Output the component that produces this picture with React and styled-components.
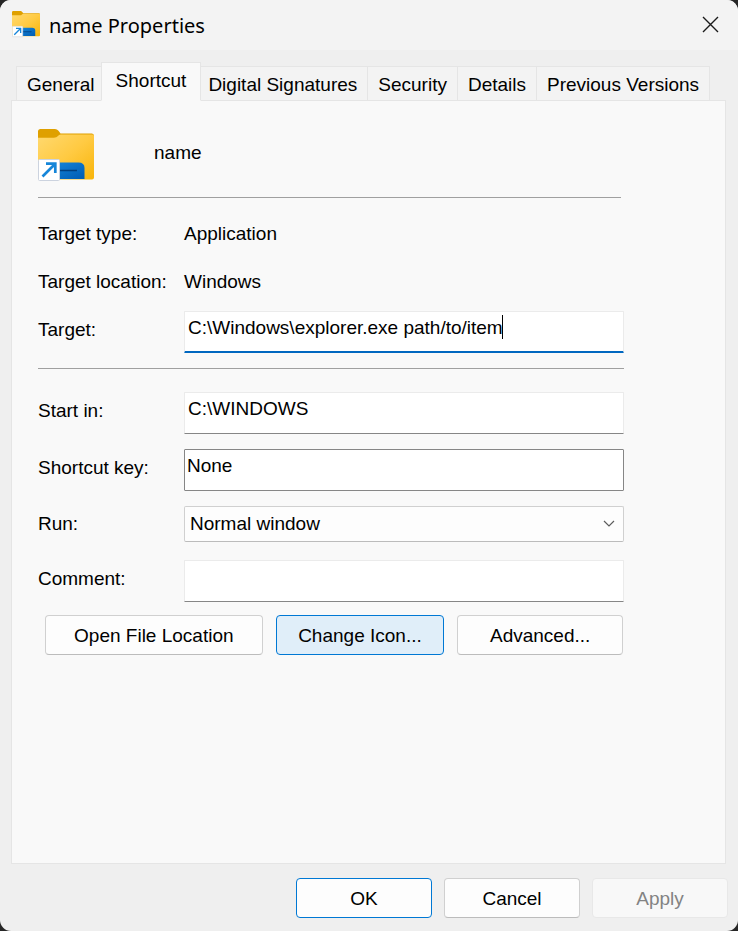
import React from "react";
import styled, { createGlobalStyle } from "styled-components";

const GlobalStyle = createGlobalStyle`
  *, *::before, *::after { box-sizing: border-box; }
  body {
    margin: 0;
    background: #262626;
    color: #000;
    font-family: "Liberation Sans", Arial, sans-serif;
    font-size: 19px;
    line-height: 24px;
  }
  button, input, select { font: inherit; color: inherit; }
`;

const Dialog = styled.form`
  display: flex;
  flex-direction: column;
  min-height: 100vh;
  background: #efefef;
  border-radius: 11px;
  overflow: hidden;
`;

const TitleBar = styled.header`
  display: flex;
  align-items: center;
  gap: 9px;
  height: 50px;
  padding: 0 18px 0 12px;
  background: #f3f3f3;
`;

const Title = styled.h1`
  flex: 1;
  margin: 0;
  padding-top: 2px;
  font-family: "Noto Sans", "Open Sans", sans-serif;
  font-size: 20px;
  font-weight: 400;
`;

const CloseButton = styled.button`
  display: flex;
  padding: 0 0 2px;
  border: 0;
  background: none;
`;

const TabList = styled.div`
  display: flex;
  align-items: flex-end;
  height: 51px;
  padding: 0 16px;
  margin-bottom: -1px;
`;

const Tab = styled.button`
  height: ${(p) => (p.$selected ? 39 : 35)}px;
  padding: ${(p) => (p.$selected ? "0 14px 2px" : "2px 10px 0")};
  margin: ${(p) => (p.$selected ? "0 -4px" : "0 -1px 0 0")};
  position: relative;
  z-index: ${(p) => (p.$selected ? 1 : 0)};
  border: 1px solid #e5e5e5;
  border-bottom-color: ${(p) => (p.$selected ? "#f9f9f9" : "#e5e5e5")};
  background: ${(p) => (p.$selected ? "#f9f9f9" : "#f3f3f3")};
  white-space: nowrap;
`;

const Panel = styled.main`
  flex: 1;
  margin: 0 12px 0 11px;
  padding: 28px 101px 24px 26px;
  border: 1px solid #e5e5e5;
  background: #f9f9f9;
`;

const Summary = styled.div`
  display: flex;
  align-items: flex-start;
  gap: 60px;
  height: 68px;
`;

const ItemName = styled.span`
  padding-top: 12px;
`;

const Divider = styled.hr`
  height: 1px;
  margin: ${(p) => (p.$short ? "0 3px 12px 0" : "10px 0 23px")};
  border: 0;
  background: #a0a0a0;
`;

const Fields = styled.div`
  display: grid;
  gap: ${(p) => p.$gap || 0}px;
`;

const Row = styled.div`
  display: grid;
  grid-template-columns: 146px 1fr;
  align-items: center;
  min-height: ${(p) => p.$height}px;
  margin-bottom: ${(p) => p.$after || 0}px;
`;

const Label = styled.label`
  padding-bottom: ${(p) => (p.$raised ? 4 : 0)}px;
`;

const FieldBox = styled.div`
  position: relative;
  display: grid;
`;

const TextInput = styled.input`
  width: 100%;
  height: 42px;
  padding: 0 3px 8px;
  border: 1px solid #ebebeb;
  border-bottom: ${(p) => (p.$active ? "2px solid #0067c0" : "1px solid #868686")};
  border-radius: 1px;
  background: #fff;
  outline: none;
  caret-color: transparent;
`;

const KeyInput = styled(TextInput)`
  padding: 0 2px 9px;
  border-color: #868686;
`;

const Caret = styled.span`
  position: absolute;
  left: 318px;
  top: 4px;
  width: 1px;
  height: 24px;
  background: #000;
`;

const Select = styled.select`
  appearance: none;
  width: 100%;
  height: 36px;
  padding: 0 36px 0 5px;
  border: 1px solid #d0d0d0;
  border-bottom-color: #bcbcbc;
  border-radius: 2px;
  background: #fdfdfd;
`;

const SelectArrow = styled.svg`
  position: absolute;
  right: 9px;
  top: 14px;
  pointer-events: none;
`;

const Actions = styled.div`
  display: grid;
  grid-template-columns: 218fr 169fr 166fr;
  gap: 13px;
  padding: 13px 1px 0 7px;
`;

const buttonBorders = {
  normal: "#d0d0d0 #d0d0d0 #bcbcbc",
  accent: "#0078d4",
  disabled: "#e8e8e8",
};

const Button = styled.button`
  height: 40px;
  padding: 2px 12px 0;
  border: 1px solid;
  border-color: ${(p) => buttonBorders[p.$look || "normal"]};
  border-radius: 4px;
  background: ${(p) => (p.$hot ? "#e0eef9" : "#fdfdfd")};
  white-space: nowrap;

  &:disabled {
    background: #f8f8f8;
    color: #838383;
  }
`;

const Footer = styled.footer`
  display: grid;
  grid-template-columns: repeat(3, 136px);
  justify-content: end;
  gap: 12px;
  padding: 14px 10px 13px;
`;

function FolderShortcut({ size, id }) {
  return (
    <svg width={size} height={size} viewBox="0 0 56 56" aria-hidden="true">
      <defs>
        <linearGradient id={`${id}-body`} x1="0" y1="0" x2="1" y2="1">
          <stop offset="0" stopColor="#ffd970" />
          <stop offset="0.5" stopColor="#ffca42" />
          <stop offset="1" stopColor="#f8b50b" />
        </linearGradient>
        <linearGradient id={`${id}-dock`} x1="0" y1="0" x2="1" y2="1">
          <stop offset="0" stopColor="#1689dc" />
          <stop offset="1" stopColor="#005bb2" />
        </linearGradient>
      </defs>
      <path d="M0 2.5Q0 0 2.5 0H17Q19 0 20.5 1.8L22.5 4.5H54Q56 4.5 56 7V18H0Z" fill="#dfa000" />
      <path d="M0 8.7H16Q18.5 8.7 20 7L21 6Q21.6 5.5 23 5.5H54.5Q56 5.5 56 7V48.5Q56 50.5 54 50.5H2Q0 50.5 0 48.5Z" fill={`url(#${id}-body)`} />
      <path d="M10 50V38Q10 33.5 14.5 33.5H40.5Q46.5 33.5 46.5 39V50Z" fill={`url(#${id}-dock)`} />
      <path d="M20 41.5H39" stroke="#003f7d" strokeWidth="1.6" />
      <rect x="0.5" y="30.5" width="21" height="21" rx="1" fill="#fff" stroke="#ccd3df" />
      <path d="M4.5 47.5L17 35M8 34.7H17.3V44" fill="none" stroke="#1686d9" strokeWidth="2.7" />
    </svg>
  );
}

const tabs = ["General", "Shortcut", "Digital Signatures", "Security", "Details", "Previous Versions"];

export default function App() {
  return (
    <>
      <GlobalStyle />
      <Dialog onSubmit={(e) => e.preventDefault()}>
        <TitleBar>
          <FolderShortcut size={28} id="small" />
          <Title>name Properties</Title>
          <CloseButton type="button" aria-label="Close">
            <svg width="19" height="19" viewBox="0 0 19 19" fill="none" stroke="#1a1a1a" strokeWidth="1.4">
              <path d="M2 2L17 17M17 2L2 17" />
            </svg>
          </CloseButton>
        </TitleBar>

        <TabList role="tablist">
          {tabs.map((name) => (
            <Tab key={name} type="button" role="tab" aria-selected={name === "Shortcut"} $selected={name === "Shortcut"}>
              {name}
            </Tab>
          ))}
        </TabList>

        <Panel>
          <Summary>
            <FolderShortcut size={56} id="large" />
            <ItemName>name</ItemName>
          </Summary>
          <Divider $short />

          <Fields>
            <Row $height={48}>
              <span>Target type:</span>
              <span>Application</span>
            </Row>
            <Row $height={48}>
              <span>Target location:</span>
              <span>Windows</span>
            </Row>
            <Row $height={52}>
              <Label htmlFor="target" $raised>Target:</Label>
              <FieldBox>
                <TextInput id="target" $active defaultValue="C:\Windows\explorer.exe path/to/item" />
                <Caret />
              </FieldBox>
            </Row>
          </Fields>
          <Divider />

          <Fields $gap={15}>
            <Row $height={42}>
              <Label htmlFor="start" $raised>Start in:</Label>
              <TextInput id="start" defaultValue="C:\WINDOWS" />
            </Row>
            <Row $height={42}>
              <Label htmlFor="key" $raised>Shortcut key:</Label>
              <KeyInput id="key" defaultValue="None" />
            </Row>
            <Row $height={36} $after={3}>
              <Label htmlFor="run">Run:</Label>
              <FieldBox>
                <Select id="run" defaultValue="Normal window">
                  <option>Normal window</option>
                  <option>Minimized</option>
                  <option>Maximized</option>
                </Select>
                <SelectArrow width="12" height="8" viewBox="0 0 12 8" fill="none" stroke="#5c5c5c" strokeWidth="1.2">
                  <path d="M1 1L6 6L11 1" />
                </SelectArrow>
              </FieldBox>
            </Row>
            <Row $height={42}>
              <Label htmlFor="comment" $raised>Comment:</Label>
              <TextInput id="comment" />
            </Row>
          </Fields>

          <Actions>
            <Button type="button">Open File Location</Button>
            <Button type="button" $look="accent" $hot>Change Icon...</Button>
            <Button type="button">Advanced...</Button>
          </Actions>
        </Panel>

        <Footer>
          <Button type="submit" $look="accent">OK</Button>
          <Button type="button">Cancel</Button>
          <Button type="button" $look="disabled" disabled>Apply</Button>
        </Footer>
      </Dialog>
    </>
  );
}
